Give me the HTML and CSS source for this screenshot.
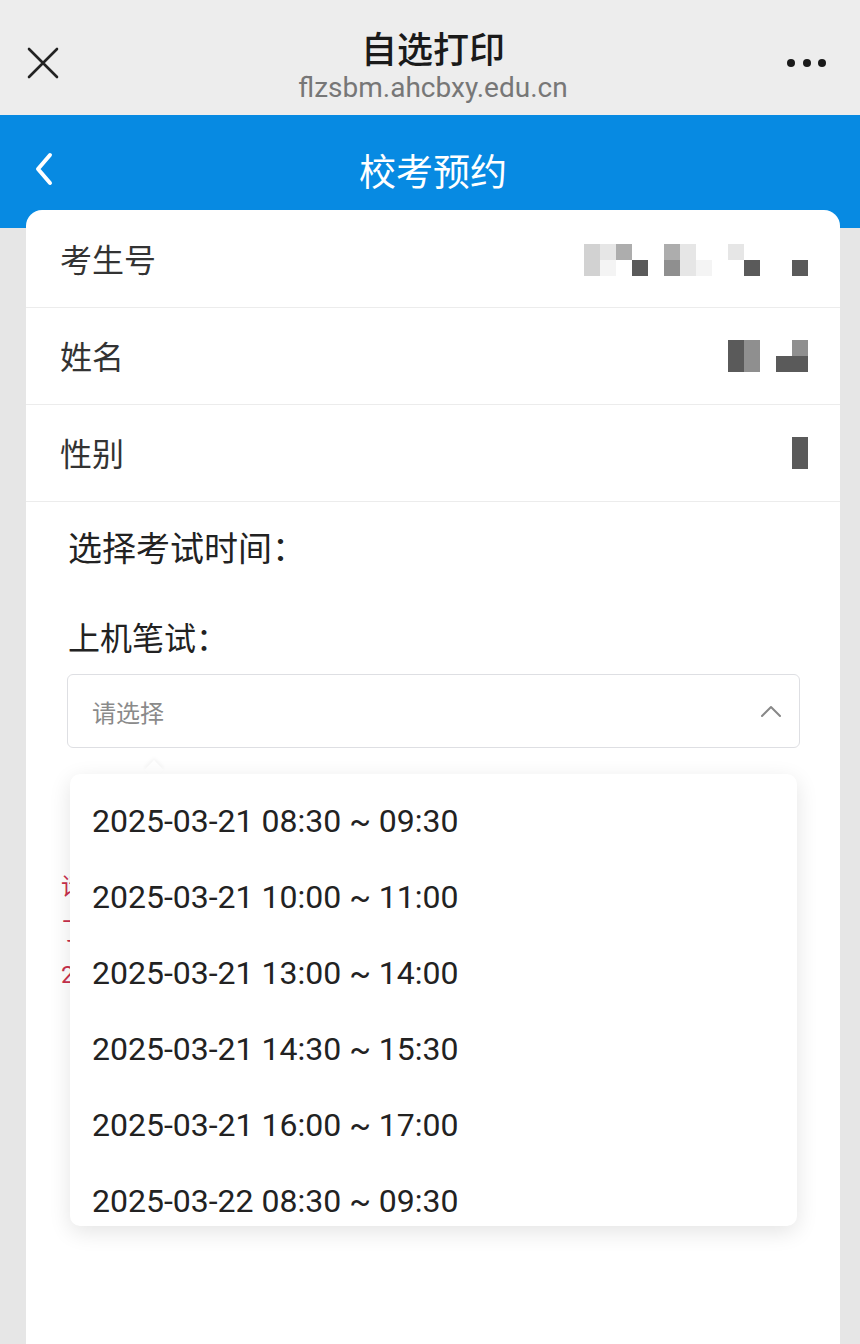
FILE: index.html
```html
<!DOCTYPE html>
<html lang="zh-CN">
<head>
    <meta charset="UTF-8">
    <meta name="viewport" content="width=device-width, initial-scale=1.0">
    <title>校考预约</title>
    <link rel="stylesheet" href="styles.css">
</head>
<body>
    <header class="topbar">
        <button class="topbar-btn close" aria-label="关闭">
            <svg width="32" height="32" viewBox="0 0 32 32"><path d="M2 2 L30 30 M30 2 L2 30" stroke="#222" stroke-width="2.6" stroke-linecap="round" fill="none"/></svg>
        </button>
        <div class="topbar-title">
            <h1>自选打印</h1>
            <p>flzsbm.ahcbxy.edu.cn</p>
        </div>
        <button class="topbar-btn more" aria-label="更多">
            <span></span><span></span><span></span>
        </button>
    </header>

    <nav class="navbar">
        <button class="back" aria-label="返回">
            <svg width="20" height="34" viewBox="0 0 20 34"><path d="M16 3 L4 17 L16 31" stroke="#fff" stroke-width="4" stroke-linecap="round" stroke-linejoin="round" fill="none"/></svg>
        </button>
        <h2>校考预约</h2>
        <span></span>
    </nav>

    <main class="card">
        <div class="info-row">
            <span class="label">考生号</span>
            <div class="mosaic cols-14">
                <i class="c2"></i><i class="c1"></i><i class="c3"></i><i></i><i></i><i class="c3"></i><i class="c1"></i><i></i><i></i><i class="c1"></i><i></i><i></i><i></i><i></i>
                <i class="c2"></i><i class="c0"></i><i></i><i class="c5"></i><i></i><i class="c4"></i><i class="c1"></i><i class="c0"></i><i></i><i></i><i class="c5"></i><i></i><i></i><i class="c5"></i>
            </div>
        </div>
        <div class="info-row">
            <span class="label">姓名</span>
            <div class="mosaic cols-5">
                <i class="c5"></i><i class="c4"></i><i></i><i></i><i class="c4"></i>
                <i class="c5"></i><i class="c4"></i><i></i><i class="c5"></i><i class="c5"></i>
            </div>
        </div>
        <div class="info-row">
            <span class="label">性别</span>
            <div class="mosaic cols-1">
                <i class="c5"></i>
                <i class="c5"></i>
            </div>
        </div>

        <section class="exam">
            <h3 class="section-title">选择考试时间：</h3>
            <h3 class="field-title">上机笔试：</h3>

            <div class="select-wrap">
                <div class="select">
                    <span class="placeholder">请选择</span>
                    <svg class="arrow" width="22" height="14" viewBox="0 0 22 14"><path d="M2 12 L11 3 L20 12" stroke="#888" stroke-width="2" stroke-linecap="round" stroke-linejoin="round" fill="none"/></svg>
                </div>

                <ul class="dropdown">
                    <li>2025-03-21 08:30 ~ 09:30</li>
                    <li>2025-03-21 10:00 ~ 11:00</li>
                    <li>2025-03-21 13:00 ~ 14:00</li>
                    <li>2025-03-21 14:30 ~ 15:30</li>
                    <li>2025-03-21 16:00 ~ 17:00</li>
                    <li>2025-03-22 08:30 ~ 09:30</li>
                </ul>
            </div>

            <div class="notice">
                <p>请考生按预约时间准时参加考试</p>
                <p>了解考试须知</p>
                <p>2025年校考</p>
            </div>
        </section>
    </main>
</body>
</html>
```

FILE: styles.css
```css
* {
    box-sizing: border-box;
    margin: 0;
    padding: 0;
}

body {
    width: 860px;
    min-height: 1344px;
    background: #e6e6e6;
    font-family: Roboto, "Noto Sans CJK SC", sans-serif;
    color: #333;
    overflow: hidden;
}

button {
    background: none;
    border: none;
    cursor: pointer;
}

.topbar {
    display: grid;
    grid-template-columns: 90px 1fr 90px;
    align-items: start;
    height: 115px;
    background: #ededed;
}

.topbar-title {
    text-align: center;
    padding-top: 25px;
    padding-left: 6px;
}

.topbar-title h1 {
    font-family: "Noto Sans CJK SC", sans-serif;
    font-size: 36px;
    font-weight: 500;
    line-height: 44px;
    color: #1a1a1a;
}

.topbar-title p {
    font-size: 28px;
    line-height: 34px;
    color: #777;
    margin-top: 2px;
}

.topbar-btn.close {
    margin: 47px 0 0 27px;
    width: 32px;
    height: 32px;
    display: flex;
}

.topbar-btn.more {
    display: flex;
    gap: 7.5px;
    margin: 59px 0 0 17px;
}

.topbar-btn.more span {
    width: 8px;
    height: 8px;
    border-radius: 50%;
    background: #1a1a1a;
}

.navbar {
    display: grid;
    grid-template-columns: 90px 1fr 90px;
    align-items: center;
    height: 113px;
    padding-bottom: 4px;
    background: #078ae2;
}

.navbar .back {
    display: flex;
    margin-left: 34px;
    margin-top: -1px;
}

.navbar h2 {
    text-align: center;
    font-family: "Noto Sans CJK SC", sans-serif;
    font-size: 37px;
    font-weight: 400;
    color: #fff;
    padding-left: 6px;
}

.card {
    margin: -18px 20px 0 26px;
    min-height: 1140px;
    background: #fff;
    border-radius: 16px 16px 0 0;
}

.info-row {
    display: flex;
    justify-content: space-between;
    align-items: center;
    height: 97px;
    padding: 0 34px;
    border-bottom: 1px solid #ececec;
}

.info-row:first-child {
    height: 98px;
    padding-top: 2px;
}

.label {
    font-size: 32px;
    color: #333;
    margin-top: -3px;
}

.mosaic {
    display: grid;
    grid-auto-rows: 16px;
}

.mosaic.cols-14 { grid-template-columns: repeat(14, 16px); margin-right: -2px; }
.mosaic.cols-5 { grid-template-columns: repeat(5, 16px); margin-right: -2px; }
.mosaic.cols-1 { grid-template-columns: 16px; margin-right: -2px; }

.mosaic i.c0 { background: #f4f4f4; }
.mosaic i.c1 { background: #e6e6e6; }
.mosaic i.c2 { background: #d2d2d2; }
.mosaic i.c3 { background: #adadad; }
.mosaic i.c4 { background: #8f8f8f; }
.mosaic i.c5 { background: #5a5a5a; }

.exam {
    padding: 27px 40px 0 41px;
}

.section-title,
.field-title {
    font-size: 32px;
    font-weight: 400;
    line-height: 40px;
    color: #222;
    padding-left: 1px;
}

.section-title {
    font-size: 34px;
}

.field-title {
    margin-top: 50px;
}

.select-wrap {
    position: relative;
    margin-top: 15px;
}

.select {
    display: flex;
    justify-content: space-between;
    align-items: center;
    height: 74px;
    padding: 0 17px 0 24px;
    border: 1px solid #dedfe3;
    border-radius: 6px;
}

.placeholder {
    font-size: 24px;
    color: #8a8a8a;
}

.dropdown {
    position: absolute;
    top: 100px;
    left: 3px;
    width: 727px;
    height: 452px;
    overflow: hidden;
    padding-top: 9px;
    list-style: none;
    background: #fff;
    border-radius: 10px;
    box-shadow: 0 6px 22px rgba(0, 0, 0, 0.11);
    z-index: 2;
}

.select-wrap::after {
    content: "";
    position: absolute;
    top: 89px;
    left: 80px;
    width: 14px;
    height: 14px;
    background: #fff;
    transform: rotate(45deg);
    box-shadow: -2px -2px 4px rgba(0, 0, 0, 0.04);
    z-index: 1;
}

.dropdown li {
    height: 76px;
    line-height: 76px;
    padding: 0 22px;
    font-size: 32px;
    color: #222;
}

.notice {
    margin-top: 117px;
    margin-left: -6px;
    color: #c8304c;
    font-size: 24px;
    line-height: 44px;
}
```
